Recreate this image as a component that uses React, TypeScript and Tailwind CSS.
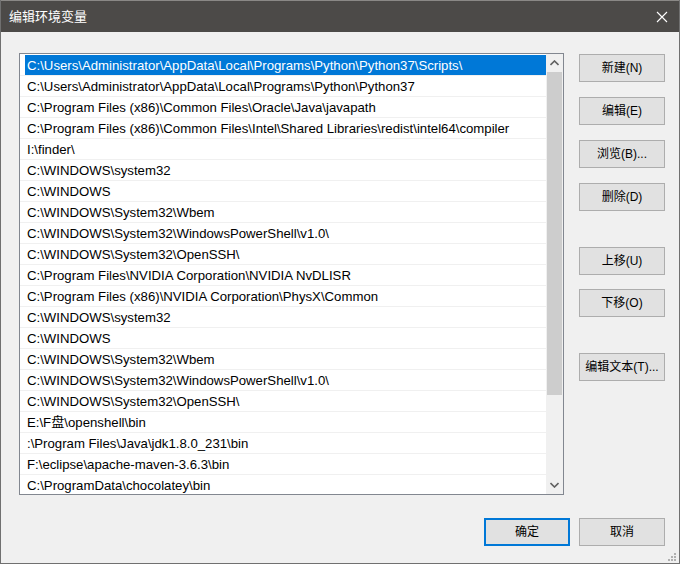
import React from 'react';

const paths = [
  'C:\\Users\\Administrator\\AppData\\Local\\Programs\\Python\\Python37\\Scripts\\',
  'C:\\Users\\Administrator\\AppData\\Local\\Programs\\Python\\Python37',
  'C:\\Program Files (x86)\\Common Files\\Oracle\\Java\\javapath',
  'C:\\Program Files (x86)\\Common Files\\Intel\\Shared Libraries\\redist\\intel64\\compiler',
  'I:\\finder\\',
  'C:\\WINDOWS\\system32',
  'C:\\WINDOWS',
  'C:\\WINDOWS\\System32\\Wbem',
  'C:\\WINDOWS\\System32\\WindowsPowerShell\\v1.0\\',
  'C:\\WINDOWS\\System32\\OpenSSH\\',
  'C:\\Program Files\\NVIDIA Corporation\\NVIDIA NvDLISR',
  'C:\\Program Files (x86)\\NVIDIA Corporation\\PhysX\\Common',
  'C:\\WINDOWS\\system32',
  'C:\\WINDOWS',
  'C:\\WINDOWS\\System32\\Wbem',
  'C:\\WINDOWS\\System32\\WindowsPowerShell\\v1.0\\',
  'C:\\WINDOWS\\System32\\OpenSSH\\',
  'E:\\F盘\\openshell\\bin',
  ':\\Program Files\\Java\\jdk1.8.0_231\\bin',
  'F:\\eclipse\\apache-maven-3.6.3\\bin',
  'C:\\ProgramData\\chocolatey\\bin',
];

const font = "font-['Liberation_Sans','Noto_Sans_CJK_SC',sans-serif]";

function Btn({ label, primary = false }: { label: string; primary?: boolean }) {
  return (
    <button
      className={
        primary
          ? 'w-[86px] h-[28px] bg-[#e1e1e1] border-2 border-[#0078d7] text-[12px] text-black'
          : 'w-[86px] h-[28px] bg-[#e1e1e1] border border-[#adadad] text-[12px] text-black'
      }
    >
      {label}
    </button>
  );
}

export default function App() {
  return (
    <div className={`w-[680px] h-[564px] flex flex-col bg-[#f0f0f0] border border-t-0 border-[#707070] ${font}`}>
      {/* title bar */}
      <div className="h-[32px] shrink-0 bg-[#4c4a48] border-t border-[#8a8886] flex items-center justify-between pl-[8px] pr-[10px]">
        <span className="text-white text-[13px]">编辑环境变量</span>
        <svg width="12" height="12" viewBox="0 0 12 12" className="mr-[1px]">
          <path d="M1 1L11 11M11 1L1 11" stroke="#fff" strokeWidth="1.1" />
        </svg>
      </div>

      <div className="flex-1 flex flex-col pt-[21px] pl-[18px] pr-[14px]">
        <div className="flex gap-[15px]">
          {/* list */}
          <div className="w-[545px] h-[442px] border border-[#828790] bg-white flex overflow-hidden">
            <div className="flex-1 pt-[1px] overflow-hidden">
              {paths.map((p, i) => (
                <div key={i} className="h-[21px] border-b border-[#f0f0f0] flex items-end">
                  <div
                    className={
                      i === 0
                        ? 'ml-[5px] h-[20px] flex-1 bg-[#0078d7] text-white text-[13.2px] leading-[21px] pl-[2px] whitespace-nowrap'
                        : 'ml-[5px] h-[20px] flex-1 text-black text-[13.2px] leading-[21px] pl-[2px] whitespace-nowrap'
                    }
                  >
                    {p}
                  </div>
                </div>
              ))}
            </div>
            {/* scrollbar */}
            <div className="w-[17px] bg-[#f0f0f0] flex flex-col items-center">
              <div className="h-[18px] w-full flex items-center justify-center">
                <svg width="9" height="6" viewBox="0 0 9 6">
                  <path d="M0.5 5L4.5 1L8.5 5" stroke="#606060" strokeWidth="1.6" fill="none" />
                </svg>
              </div>
              <div className="w-[15px] h-[323px] bg-[#cdcdcd]" />
              <div className="flex-1" />
              <div className="h-[18px] w-full flex items-center justify-center">
                <svg width="9" height="6" viewBox="0 0 9 6">
                  <path d="M0.5 1L4.5 5L8.5 1" stroke="#606060" strokeWidth="1.6" fill="none" />
                </svg>
              </div>
            </div>
          </div>

          {/* side buttons */}
          <div className="flex flex-col pt-[1px]">
            <div className="flex flex-col gap-[15px]">
              <Btn label="新建(N)" />
              <Btn label="编辑(E)" />
              <Btn label="浏览(B)..." />
              <Btn label="删除(D)" />
            </div>
            <div className="flex flex-col gap-[14px] mt-[36px]">
              <Btn label="上移(U)" />
              <Btn label="下移(O)" />
            </div>
            <div className="mt-[36px]">
              <Btn label="编辑文本(T)..." />
            </div>
          </div>
        </div>

        <div className="flex justify-end gap-[9px] mt-[23px]">
          <Btn label="确定" primary />
          <Btn label="取消" />
        </div>
      </div>

      {/* size grip */}
      <div className="h-[6px] flex justify-end pr-[3px] pb-[2px]">
        <svg width="8" height="8" viewBox="0 0 8 8" className="-mt-[4px]">
          <rect x="6" y="0" width="2" height="2" fill="#b0b0b0" />
          <rect x="3" y="3" width="2" height="2" fill="#b0b0b0" />
          <rect x="6" y="3" width="2" height="2" fill="#b0b0b0" />
          <rect x="0" y="6" width="2" height="2" fill="#b0b0b0" />
          <rect x="3" y="6" width="2" height="2" fill="#b0b0b0" />
          <rect x="6" y="6" width="2" height="2" fill="#b0b0b0" />
        </svg>
      </div>
    </div>
  );
}
